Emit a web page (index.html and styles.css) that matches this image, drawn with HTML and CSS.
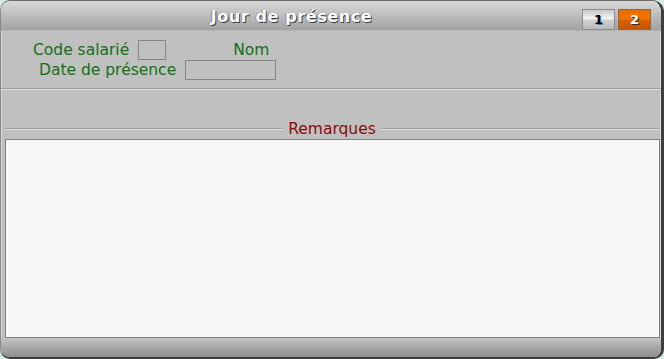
FILE: index.html
```html
<!DOCTYPE html>
<html lang="fr">
<head>
<meta charset="utf-8">
<title>Jour de présence</title>
<link rel="stylesheet" href="styles.css">
</head>
<body>
<div class="window">
  <div class="titlebar">
    <div class="title">Jour de présence</div>
    <div class="tabs">
      <span class="tab tab-1">1</span>
      <span class="tab tab-2">2</span>
    </div>
  </div>
  <div class="form">
    <div class="row row-1">
      <span class="label">Code salarié</span>
      <span class="field field-code"></span>
      <span class="label label-nom">Nom</span>
    </div>
    <div class="row row-2">
      <span class="label">Date de présence</span>
      <span class="field field-date"></span>
    </div>
  </div>
  <div class="separator"></div>
  <div class="legend-row">
    <span class="legend-line legend-line-left"></span>
    <span class="legend">Remarques</span>
    <span class="legend-line legend-line-right"></span>
  </div>
  <div class="memo"></div>
  <div class="footer"></div>
</div>
</body>
</html>
```

FILE: styles.css
```css
html, body {
  margin: 0;
  padding: 0;
}
body {
  background: #d4ebe6;
  width: 664px;
  height: 359px;
  overflow: hidden;
  font-family: "DejaVu Sans", Verdana, sans-serif;
}
.window {
  box-sizing: border-box;
  width: 664px;
  height: 359px;
  display: flex;
  flex-direction: column;
  background: #c0c0c0;
  border-top: 1px solid #6a6a6a;
  border-left: 1px solid #8a8a8a;
  border-right: 3px solid #3e3e3e;
  border-bottom: 2px solid #3e3e3e;
  border-radius: 10px 12px 10px 10px;
  overflow: hidden;
  box-shadow: inset -1px 0 0 #dcdcdc, inset 1px 0 0 #d8d8d8;
}
.titlebar {
  height: 30px;
  flex: none;
  display: flex;
  align-items: flex-start;
  background: linear-gradient(#d8d8d8, #a2a2a2);
  border-bottom: 1px solid #b4b4b4;
  box-sizing: border-box;
}
.title {
  flex: 1;
  text-align: center;
  color: #ffffff;
  font-weight: bold;
  font-size: 16px;
  line-height: 18px;
  padding-top: 7px;
  text-shadow: 1px 1px 0 #404040, -1px 0 0 #8a8aa8;
  letter-spacing: 0.6px;
}
.tabs {
  display: flex;
  gap: 3px;
  padding-top: 8px;
  padding-right: 10px;
}
.tab {
  box-sizing: border-box;
  width: 33px;
  height: 21px;
  display: flex;
  align-items: center;
  justify-content: center;
  font-weight: bold;
  font-size: 13px;
  border: 1px solid #8c8c8c;
}
.tab-1 {
  color: #000000;
  background: linear-gradient(#c8c8c8, #f4f4f4 45%, #d0d0d0 55%, #b8b8b8);
  text-shadow: 1px 1px 0 #4a8ad0;
}
.tab-2 {
  color: #ffffff;
  background: linear-gradient(#e86a00, #f07400 45%, #d86000 55%, #c85400);
  border-color: #8c6a50;
  text-shadow: 1px 1px 0 #303030;
}
.form {
  height: 57px;
  flex: none;
  box-sizing: border-box;
  padding-top: 9px;
}
.row {
  display: flex;
  align-items: center;
  height: 20px;
}
.row-1 {
  padding-left: 32px;
}
.row-2 {
  padding-left: 38px;
}
.label {
  color: #137013;
  font-size: 15.5px;
  line-height: 20px;
  white-space: nowrap;
}
.field {
  box-sizing: border-box;
  height: 20px;
  border: 1px solid #868686;
  background: #c0c0c0;
}
.field-code {
  width: 28px;
  margin-left: 9px;
}
.field-date {
  width: 91px;
  margin-left: 9px;
}
.label-nom {
  margin-left: 67px;
}
.separator {
  flex: none;
  height: 0;
  border-top: 1px solid #9c9c9c;
  border-bottom: 1px solid #dedede;
}
.legend-row {
  flex: none;
  height: 20px;
  margin-top: 29px;
  display: flex;
  align-items: center;
  padding: 0 2px 0 4px;
}
.legend-line {
  flex: 1;
  height: 0;
  border-top: 1px solid #9c9c9c;
  border-bottom: 1px solid #dedede;
}
.legend {
  color: #8a0a0a;
  font-size: 15.5px;
  line-height: 20px;
  padding: 0 6px;
}
.memo {
  flex: none;
  box-sizing: border-box;
  height: 199px;
  margin: 0 1px 0 4px;
  background: #f7f7f7;
  border: 1px solid #808080;
}
.footer {
  flex: 1;
  background: linear-gradient(#c4c4c4, #a8a8a8 50%, #8e8e8e);
}
```
